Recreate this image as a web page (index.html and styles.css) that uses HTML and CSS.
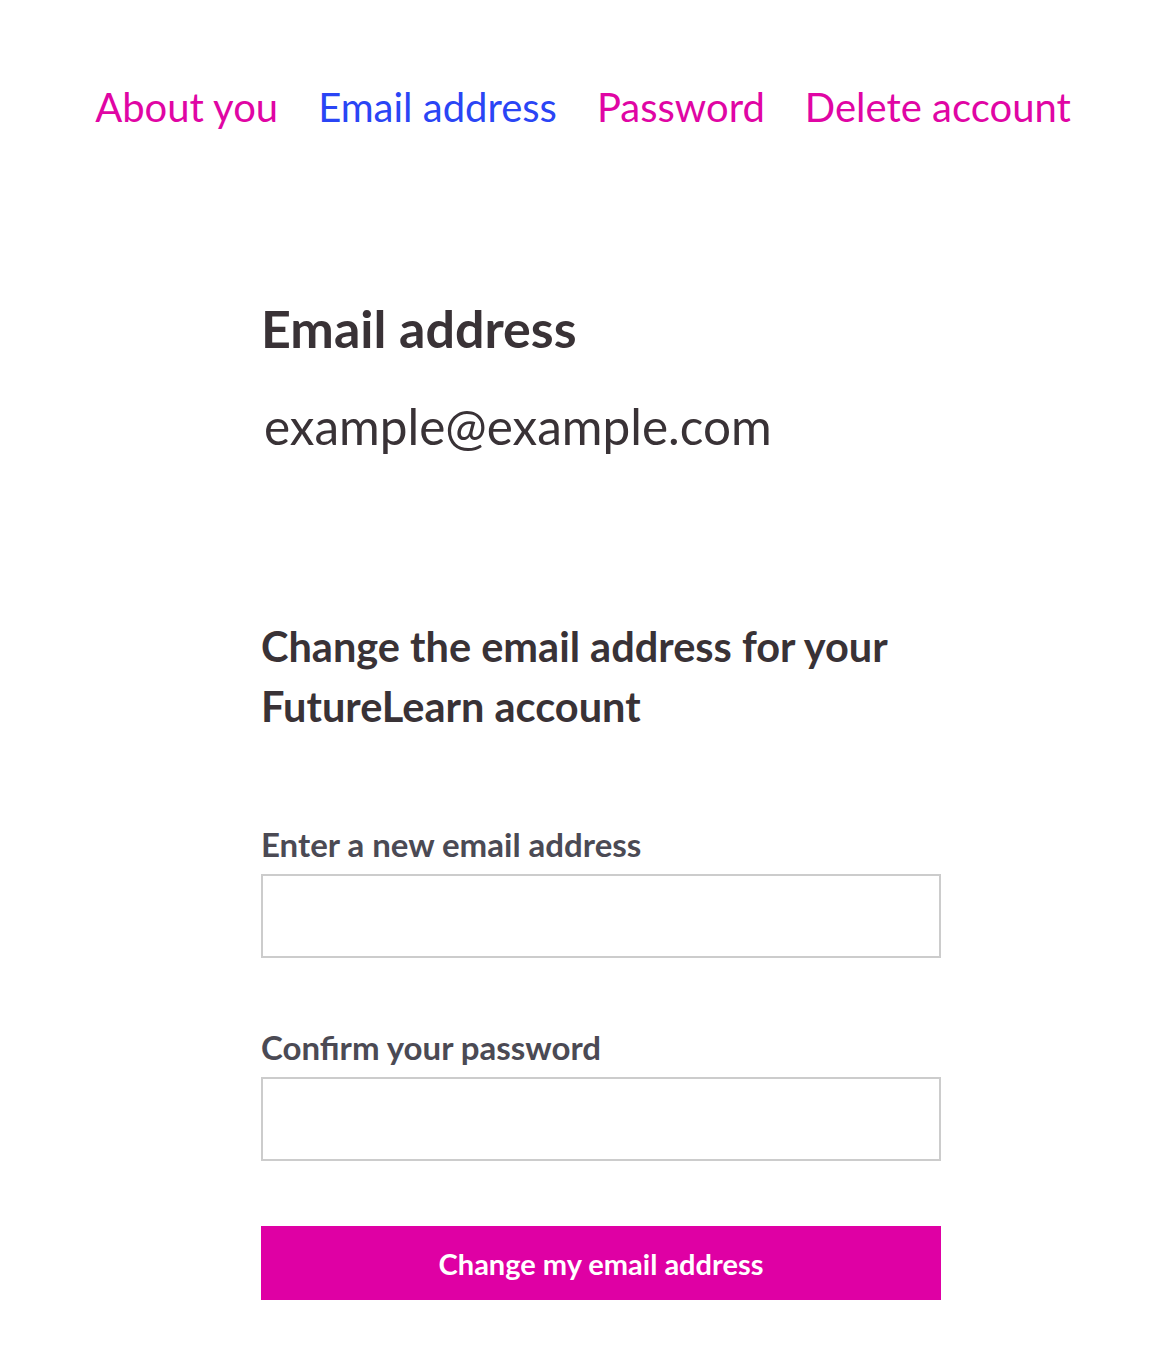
FILE: index.html
```html
<!DOCTYPE html>
<html lang="en">
<head>
    <meta charset="UTF-8">
    <meta name="viewport" content="width=device-width, initial-scale=1.0">
    <title>Email address</title>
    <link rel="stylesheet" href="styles.css">
</head>
<body>

    <nav class="account-nav">
        <a href="#">About you</a>
        <a href="#" class="active">Email address</a>
        <a href="#">Password</a>
        <a href="#">Delete account</a>
    </nav>

    <main class="content">
        <h1>Email address</h1>
        <p class="current-email">example@example.com</p>

        <h2>Change the email address for your FutureLearn account</h2>

        <form class="email-form" action="#" method="POST">
            <div class="form-group">
                <label for="new-email">Enter a new email address</label>
                <input type="email" id="new-email" name="new_email">
            </div>

            <div class="form-group">
                <label for="password">Confirm your password</label>
                <input type="password" id="password" name="password">
            </div>

            <button type="submit" class="submit-button">Change my email address</button>
        </form>
    </main>

</body>
</html>
```

FILE: styles.css
```css
body {
    font-family: Lato, "Noto Sans", Arial, sans-serif;
    background-color: #fff;
    margin: 0;
    padding: 0;
    color: #393236;
}

.account-nav {
    display: flex;
    justify-content: center;
    gap: 40px;
    padding: 82px 8px 0 0;
    height: 60px;
}

.account-nav a {
    font-size: 40px;
    line-height: 50px;
    color: #e005a4;
    text-decoration: none;
}

.account-nav a.active {
    color: #2a45f5;
}

.content {
    width: 680px;
    margin-left: 261px;
    padding-top: 156px;
}

h1 {
    font-size: 52px;
    font-weight: 700;
    line-height: 60px;
    margin: 0 0 38px;
}

.current-email {
    font-size: 49.5px;
    line-height: 60px;
    margin: 0 0 160px 3px;
}

h2 {
    font-size: 41.5px;
    font-weight: 700;
    line-height: 60px;
    margin: 0 0 88px;
}

.form-group + .form-group {
    margin-top: 69px;
}

.form-group label {
    display: block;
    font-size: 33px;
    font-weight: 700;
    color: #4b4a54;
    line-height: 40px;
    margin-bottom: 10px;
}

.form-group input {
    display: block;
    box-sizing: border-box;
    width: 100%;
    height: 84px;
    border: 2px solid #cccccc;
    border-radius: 0;
    padding: 0 16px;
    font-size: 30px;
    font-family: inherit;
}

.submit-button {
    display: block;
    width: 100%;
    height: 74px;
    margin-top: 65px;
    border: none;
    background-color: #df00a4;
    color: #fff;
    font-family: inherit;
    font-size: 29px;
    font-weight: 700;
    cursor: pointer;
}
```
